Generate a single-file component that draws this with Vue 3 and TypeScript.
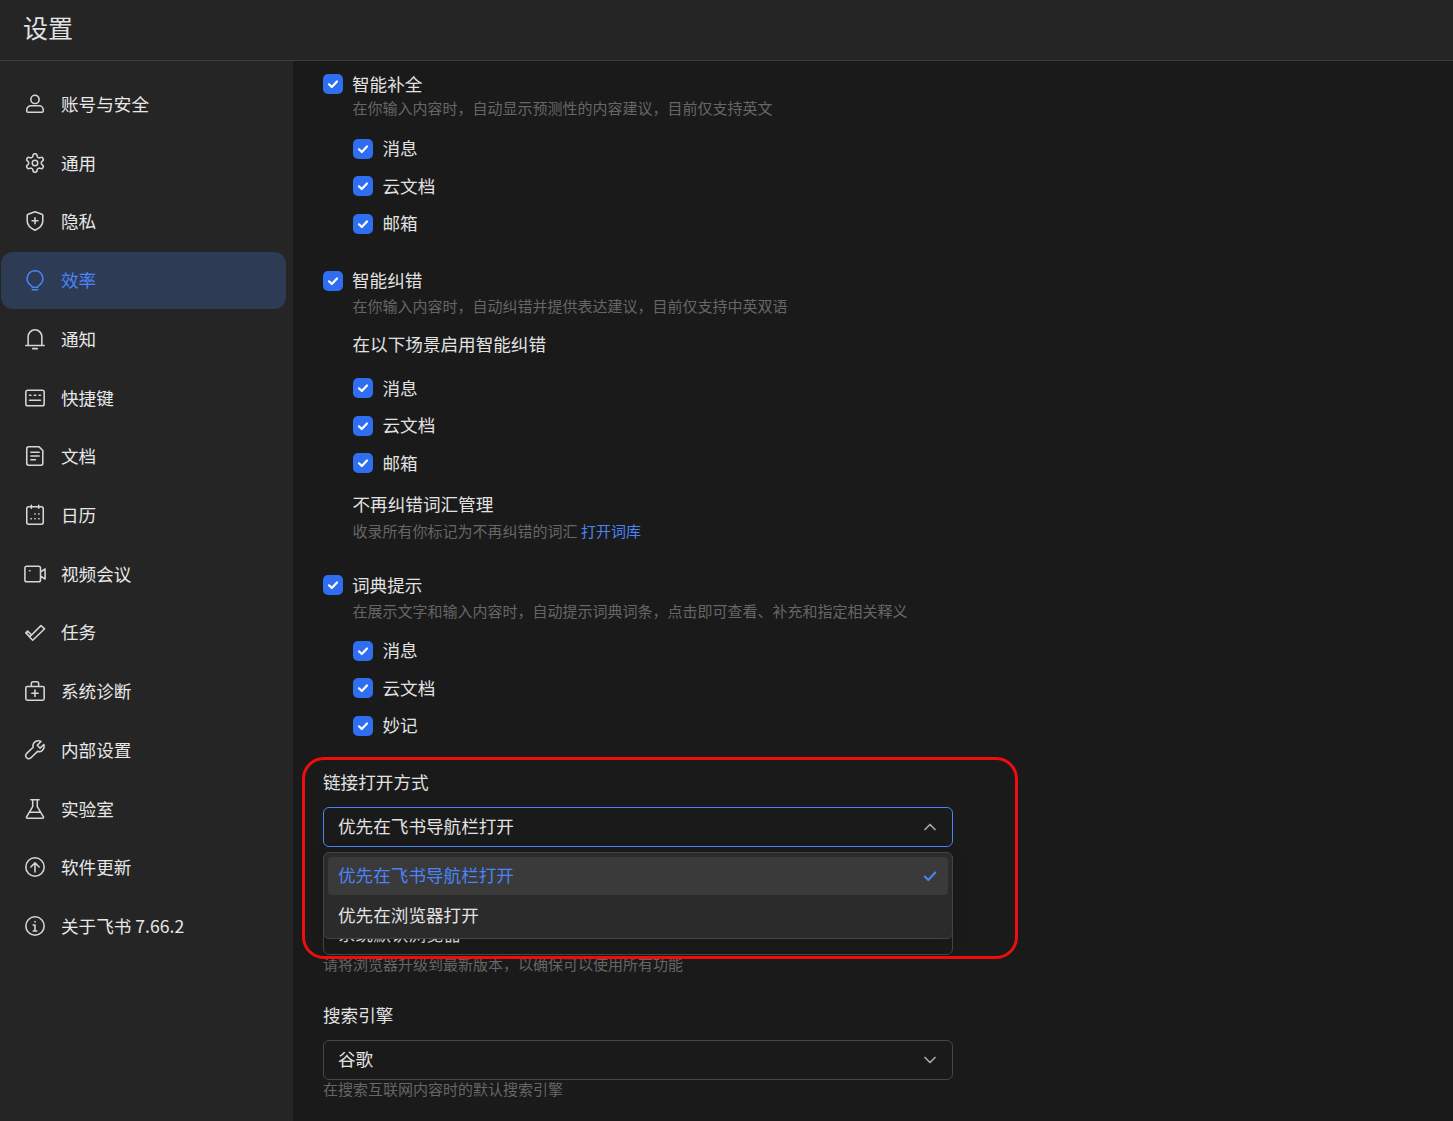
<script setup lang="ts">
interface NavItem { label: string; d: string; active?: boolean }
const nav: NavItem[] = [
  { label: '账号与安全', d: 'M12 2.500a4.500 4.500 0 1 0 0 9a4.500 4.500 0 1 0 0-9zM3 18.500a4.500 4.500 0 0 1 4.500-4.500h9a4.500 4.500 0 0 1 4.500 4.500v1a1.500 1.500 0 0 1-1.500 1.500h-15A1.500 1.500 0 0 1 3 19.500z' },
  { label: '通用', d: 'M12.22 2h-.44a2 2 0 0 0-2 2v.18a2 2 0 0 1-1 1.73l-.43.25a2 2 0 0 1-2 0l-.15-.08a2 2 0 0 0-2.73.73l-.22.38a2 2 0 0 0 .73 2.73l.15.1a2 2 0 0 1 1 1.72v.51a2 2 0 0 1-1 1.74l-.15.09a2 2 0 0 0-.73 2.73l.22.38a2 2 0 0 0 2.73.73l.15-.08a2 2 0 0 1 2 0l.43.25a2 2 0 0 1 1 1.73V20a2 2 0 0 0 2 2h.44a2 2 0 0 0 2-2v-.18a2 2 0 0 1 1-1.73l.43-.25a2 2 0 0 1 2 0l.15.08a2 2 0 0 0 2.73-.73l.22-.39a2 2 0 0 0-.73-2.73l-.15-.08a2 2 0 0 1-1-1.74v-.5a2 2 0 0 1 1-1.74l.15-.09a2 2 0 0 0 .73-2.73l-.22-.38a2 2 0 0 0-2.73-.73l-.15.08a2 2 0 0 1-2 0l-.43-.25a2 2 0 0 1-1-1.73V4a2 2 0 0 0-2-2zM12 9a3 3 0 1 0 0 6a3 3 0 1 0 0-6z' },
  { label: '隐私', d: 'M12 2l7.500 2.700a1.500 1.500 0 0 1 1 1.400V12c0 4.500-3.500 7.800-8.500 10C7 19.800 3.500 16.500 3.500 12V6.100a1.500 1.500 0 0 1 1-1.400zM12 8.500v6.500M8.800 11.700h6.400' },
  { label: '效率', active: true, d: 'M12 2a8.500 8.500 0 0 0-4.800 15.500c.9.600 1.800 1.300 1.800 2.500h6c0-1.200.9-1.900 1.800-2.500A8.500 8.500 0 0 0 12 2zM9 22.700h6' },
  { label: '通知', d: 'M12 2a7.500 7.500 0 0 0-7.500 7.500V19h15V9.500A7.500 7.500 0 0 0 12 2zM2 19h20M9.500 22.500h5' },
  { label: '快捷键', d: 'M4 3.500h16a2 2 0 0 1 2 2v13a2 2 0 0 1-2 2H4a2 2 0 0 1-2-2v-13a2 2 0 0 1 2-2zM6 9h1.500M11.200 9h1.600M16.500 9H18M6 14.500h12' },
  { label: '文档', d: 'M5 2h11.500l4 4V20a2 2 0 0 1-2 2H5a2 2 0 0 1-2-2V4a2 2 0 0 1 2-2zM7.500 8h9M7.500 12h9M7.500 16h5' },
  { label: '日历', d: 'M5 3h14a2 2 0 0 1 2 2v15a2 2 0 0 1-2 2H5a2 2 0 0 1-2-2V5a2 2 0 0 1 2-2zM8 1.500v3M16 1.500v3M11.800 11h.4M16 11h.4M7.600 16h.4M11.800 16h.4M16 16h.4' },
  { label: '视频会议', d: 'M3 3.500h13a2 2 0 0 1 2 2v13a2 2 0 0 1-2 2H3a2 2 0 0 1-2-2v-13a2 2 0 0 1 2-2zM18 10l5-3.500v11L18 14M6 8.500h.5' },
  { label: '任务', d: 'M2 13l2-2 4 4-2 2zM9.500 21L6 17.500 18.500 5l4 3.500z' },
  { label: '系统诊断', d: 'M3.500 7h17A1.500 1.500 0 0 1 22 8.500v12a1.500 1.500 0 0 1-1.500 1.500h-17A1.500 1.500 0 0 1 2 20.500v-12A1.500 1.500 0 0 1 3.500 7zM8 7V4a2 2 0 0 1 2-2h4a2 2 0 0 1 2 2v3M12 11v7M8.500 14.500h7' },
  { label: '内部设置', d: 'M15.500 2c-3.800 0-6.500 3-5.500 7l-7.300 7a3.300 3.300 0 0 0 4.600 4.700l7.500-7.200c3.800 1 7.200-1.500 7.200-5.500 0-.8-.1-1.300-.4-2L17.500 10 14.500 6.800 18.500 2.700c-.8-.4-1.900-.7-3-.7z' },
  { label: '实验室', d: 'M7.500 2h9M9.500 2v7.500L2.800 20.500a1 1 0 0 0 .8 1.500h16.800a1 1 0 0 0 .8-1.500L14.500 9.500V2M6.300 15.500h11.400' },
  { label: '软件更新', d: 'M12 2a10 10 0 1 0 0 20a10 10 0 1 0 0-20zM12 17.500v-10M7.500 12L12 7.500l4.500 4.500' },
  { label: '关于飞书 7.66.2', d: 'M12 2a10 10 0 1 0 0 20a10 10 0 1 0 0-20zM12 11v6.500M10 11h2M10 17.500h4M12 7v.5' },
]
const sub1 = ['消息', '云文档', '邮箱']
const sub2 = ['消息', '云文档', '妙记']
</script>

<template>
  <div class="app">
    <header class="top">设置</header>
    <div class="body">
      <nav class="side">
        <a v-for="n in nav" :key="n.label" class="nav" :class="{ on: n.active }">
          <svg class="nav-ico" viewBox="0 0 24 24" fill="none" stroke="currentColor" stroke-width="1.700" stroke-linecap="round" stroke-linejoin="round"><path :d="n.d" /></svg>
          <span>{{ n.label }}</span>
        </a>
      </nav>
      <main class="main">
        <section class="s1">
          <label class="head"><i class="cb"><svg viewBox="0 0 20 20"><path d="M6 10.300l2.800 2.700L14 7.500" /></svg></i><span>智能补全</span></label>
          <p class="desc">在你输入内容时，自动显示预测性的内容建议，目前仅支持英文</p>
          <div class="subs">
            <label v-for="t in sub1" :key="t" class="sub"><i class="cb"><svg viewBox="0 0 20 20"><path d="M6 10.300l2.800 2.700L14 7.500" /></svg></i><span>{{ t }}</span></label>
          </div>
        </section>
        <section class="s2">
          <label class="head"><i class="cb"><svg viewBox="0 0 20 20"><path d="M6 10.300l2.800 2.700L14 7.500" /></svg></i><span>智能纠错</span></label>
          <p class="desc">在你输入内容时，自动纠错并提供表达建议，目前仅支持中英双语</p>
          <h4 class="plain scene">在以下场景启用智能纠错</h4>
          <div class="subs">
            <label v-for="t in sub1" :key="t" class="sub"><i class="cb"><svg viewBox="0 0 20 20"><path d="M6 10.300l2.800 2.700L14 7.500" /></svg></i><span>{{ t }}</span></label>
          </div>
          <h4 class="plain manage">不再纠错词汇管理</h4>
          <p class="desc indent">收录所有你标记为不再纠错的词汇 <a class="link">打开词库</a></p>
        </section>
        <section class="s3">
          <label class="head"><i class="cb"><svg viewBox="0 0 20 20"><path d="M6 10.300l2.800 2.700L14 7.500" /></svg></i><span>词典提示</span></label>
          <p class="desc">在展示文字和输入内容时，自动提示词典词条，点击即可查看、补充和指定相关释义</p>
          <div class="subs">
            <label v-for="t in sub2" :key="t" class="sub"><i class="cb"><svg viewBox="0 0 20 20"><path d="M6 10.300l2.800 2.700L14 7.500" /></svg></i><span>{{ t }}</span></label>
          </div>
        </section>
        <section class="field link-mode">
          <h4 class="f-title">链接打开方式</h4>
          <div class="select open">
            <span>优先在飞书导航栏打开</span>
            <svg class="chev" viewBox="0 0 16 16"><path d="M3 10.500L8 5.500l5 5" /></svg>
          </div>
          <div class="menu">
            <div class="opt cur"><span>优先在飞书导航栏打开</span><svg class="tick" viewBox="0 0 16 16"><path d="M2.800 8.500L6.300 12l7-7.500" /></svg></div>
            <div class="opt"><span>优先在浏览器打开</span></div>
          </div>
        </section>
        <div class="select browser"><span>系统默认浏览器</span></div>
        <p class="desc flat">请将浏览器升级到最新版本，以确保可以使用所有功能</p>
        <section class="field engine">
          <h4 class="f-title">搜索引擎</h4>
          <div class="select">
            <span>谷歌</span>
            <svg class="chev" viewBox="0 0 16 16"><path d="M3 5.500L8 10.500l5-5" /></svg>
          </div>
          <p class="desc flat">在搜索互联网内容时的默认搜索引擎</p>
        </section>
        <div class="mark"></div>
      </main>
    </div>
  </div>
</template>

<style>
html, body { margin: 0; background: #1a1a1a; overflow: hidden; }
</style>

<style scoped>
.app {
  width: 1453px;
  height: 1121px;
  overflow: hidden;
  display: flex;
  flex-direction: column;
  background: #1a1a1a;
  color: #dedede;
  font-family: "Noto Sans CJK SC", "Noto Sans", sans-serif;
}
.top {
  height: 60px;
  flex: none;
  background: #252525;
  border-bottom: 1px solid #3c3c3c;
  padding-left: 23px;
  font-size: 25px;
  line-height: 54px;
  color: #e2e2e2;
}
.body { flex: 1; display: flex; min-height: 0; }
.side {
  width: 293px;
  flex: none;
  background: #252525;
  padding: 14.500px 7px 0 1px;
  box-sizing: border-box;
  display: flex;
  flex-direction: column;
  gap: 1.720px;
}
.nav {
  height: 57px;
  flex: none;
  display: flex;
  align-items: center;
  gap: 15px;
  padding-left: 23px;
  border-radius: 12px;
  font-size: 17.600px;
  color: #e8e8e8;
}
.nav span { margin-bottom: 1px; }
.nav.on { background: #2e3b55; color: #4a84f5; }
.nav-ico { width: 22px; height: 22px; color: #d6d6d6; }
.nav.on .nav-ico { color: #4a84f5; }
.main { flex: 1; min-width: 0; position: relative; padding-left: 30px; }
.head, .sub {
  display: flex;
  align-items: center;
  font-size: 17.600px;
  color: #e2e2e2;
}
.head span, .sub span, .select span, .opt span { margin-bottom: 2px; }
.head { height: 24px; gap: 9px; }
.sub { height: 37.500px; gap: 9.500px; }
.cb {
  width: 20px;
  height: 20px;
  flex: none;
  border-radius: 5px;
  background: #2f6ef0;
  display: block;
}
.cb svg { display: block; width: 20px; height: 20px; fill: none; stroke: #fff; stroke-width: 2.200; stroke-linecap: round; stroke-linejoin: round; }
.desc {
  margin: 0 0 0 29.500px;
  height: 24px;
  font-size: 15px;
  line-height: 24px;
  color: #666;
  white-space: nowrap;
}
.desc.flat { margin-left: 0; }
.link { color: #4a84f5; }
.subs { margin: 10px 0 0 30px; }
.plain {
  margin: 0 0 0 29.500px;
  font-size: 17.600px;
  font-weight: 400;
  line-height: 30px;
  color: #e2e2e2;
}
.s1 { padding-top: 11px; }
.s2 { margin-top: 26px; }
.s2 > .desc { margin-top: 1px; }
.scene { margin-top: 11px; }
.s2 .subs { margin-top: 11px; }
.manage { margin-top: 7px; }
.s2 > .indent { margin-top: 0; }
.s3 { margin-top: 30px; }
.s3 > .desc { margin-top: 2px; }
.s3 .subs { margin-top: 9px; }
.field { position: relative; }
.f-title {
  margin: 0 0 11px;
  font-size: 17.600px;
  font-weight: 400;
  line-height: 28px;
  color: #e2e2e2;
}
.link-mode { margin-top: 23px; }
.select {
  width: 630px;
  height: 40px;
  box-sizing: border-box;
  display: flex;
  align-items: center;
  justify-content: space-between;
  padding: 0 14px;
  border: 1px solid #464646;
  border-radius: 6px;
  font-size: 17.600px;
  color: #e2e2e2;
  background: #1a1a1a;
}
.select.open { border-color: #4a84f5; }
.chev { width: 16px; height: 16px; fill: none; stroke: #a8a8a8; stroke-width: 1.700; stroke-linecap: round; stroke-linejoin: round; }
.menu {
  position: absolute;
  z-index: 2;
  top: 84px;
  left: 0;
  width: 630px;
  height: 87px;
  box-sizing: border-box;
  padding: 4px;
  background: #2b2b2b;
  border: 1px solid #444;
  border-radius: 6px;
  box-shadow: 0 4px 16px rgba(0, 0, 0, 0.150);
}
.opt {
  height: 38px;
  display: flex;
  align-items: center;
  justify-content: space-between;
  padding: 0 9px 0 10px;
  border-radius: 4px;
  font-size: 17.600px;
  color: #e2e2e2;
}
.opt + .opt { height: 40px; margin-top: 1px; }
.opt.cur { background: #3a3a3a; color: #4a84f5; }
.tick { width: 16px; height: 16px; margin-right: 1px; fill: none; stroke: #4a84f5; stroke-width: 2; stroke-linecap: round; stroke-linejoin: round; }
.browser { margin-top: 68px; }
.browser + .desc { height: 20px; line-height: 18px; }
.engine { margin-top: 26px; }
.engine .desc { height: 20px; line-height: 18px; }
.mark {
  position: absolute;
  left: 9px;
  top: 696px;
  width: 716px;
  height: 202px;
  box-sizing: border-box;
  border: 3px solid #f00d0d;
  border-radius: 22px;
  z-index: 3;
  pointer-events: none;
}
</style>
